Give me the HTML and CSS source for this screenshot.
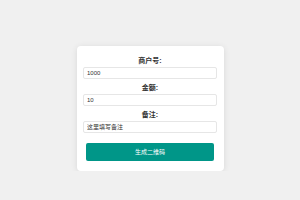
FILE: index.html
```html
<!DOCTYPE html>
<html lang="zh-CN">
<head>
    <meta charset="UTF-8">
    <meta name="viewport" content="width=device-width, initial-scale=1.0">
    <title>生成二维码</title>
    <link rel="stylesheet" href="styles.css">
</head>
<body>
    <div class="form-card">
        <div class="field">
            <label class="field-label" for="merchant">商户号:</label>
            <input class="field-input" id="merchant" type="text" value="1000">
        </div>
        <div class="field">
            <label class="field-label" for="amount">金额:</label>
            <input class="field-input" id="amount" type="text" value="10">
        </div>
        <div class="field">
            <label class="field-label" for="remark">备注:</label>
            <input class="field-input" id="remark" type="text" value="这里填写备注">
        </div>
        <button class="submit-btn" type="button">生成二维码</button>
    </div>
</body>
</html>
```

FILE: styles.css
```css
body {
    margin: 0;
    font-family: "Liberation Sans", "Noto Sans CJK SC", sans-serif;
    background: #f0f0f0;
    color: #333;
}
.form-card {
    box-sizing: border-box;
    width: 147px;
    margin: 46px auto 0;
    padding: 11px 6.5px 10px;
    background: #fff;
    border-radius: 4px;
    box-shadow: 0 1px 6px rgba(0,0,0,0.1);
}
.field {
    display: flex;
    flex-direction: column;
    gap: 2px;
    margin-bottom: 5.5px;
}
.field-label {
    display: block;
    height: 8px;
    line-height: 8px;
    font-size: 7px;
    font-weight: 700;
    text-align: center;
    color: #333;
}
.field-input {
    box-sizing: border-box;
    width: 100%;
    height: 11.5px;
    margin: 0;
    padding: 0 3px;
    border: 1px solid #e6e6e6;
    border-radius: 2px;
    font-family: inherit;
    font-size: 6px;
    color: #333;
    outline: none;
}
.submit-btn {
    display: block;
    box-sizing: border-box;
    width: 128px;
    height: 18.5px;
    margin: 10px auto 0;
    padding: 0;
    border: none;
    border-radius: 2px;
    background: #009688;
    color: #fff;
    font-family: inherit;
    font-size: 6px;
    cursor: pointer;
}
```
